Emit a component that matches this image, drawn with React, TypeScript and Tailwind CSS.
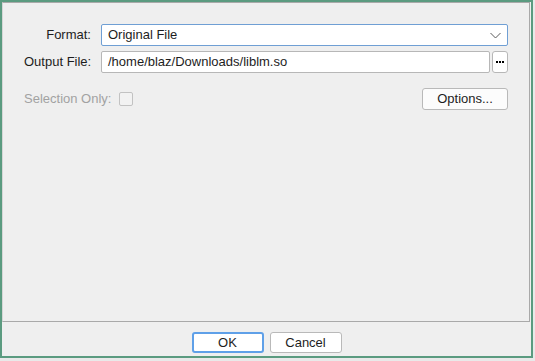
export default function App() {
  return (
    <div className="w-[535px] h-[361px] bg-[#e9e9e9] overflow-hidden font-['Liberation_Sans',Arial,sans-serif] text-[13px] text-[#1d1d1d]">
      <div className="w-[533px] h-[358px] border-2 border-[#5b9b80] bg-[#efefef] flex flex-col">
        {/* Main panel */}
        <div className="h-[320px] mr-[1px] border border-[#a9a9a9] border-l-[#d6d6d6] pt-[21px] pl-[21px] pr-[21px] flex flex-col">
          <div className="flex items-center h-[22px]">
            <span className="w-[68px] shrink-0 whitespace-nowrap text-right pr-[1px]">Format:</span>
            <div className="ml-[9px] flex-1 h-[22px] bg-white border border-[#6f9fd4] rounded-[2px] flex items-center pl-[6px] pr-[6px]">
              <span className="flex-1">Original File</span>
              <svg width="11" height="7" viewBox="0 0 11 7" className="mt-[1px]">
                <path d="M0.5 1 L5.5 6 L10.5 1" fill="none" stroke="#5a5a5a" strokeWidth="1" />
              </svg>
            </div>
          </div>
          <div className="flex items-center h-[22px] mt-[5px]">
            <span className="w-[68px] shrink-0 whitespace-nowrap text-right pr-[1px]">Output File:</span>
            <div className="ml-[9px] flex-1 h-[22px] bg-white border border-[#b7b7b7] rounded-[2px] flex items-center pl-[6px] whitespace-nowrap">
              /home/blaz/Downloads/liblm.so
            </div>
            <button className="ml-[2px] w-[16px] h-[22px] bg-white border border-[#b7b7b7] rounded-[3px] flex items-center justify-center gap-[1px]">
              <span className="w-[2px] h-[2px] bg-black" />
              <span className="w-[2px] h-[2px] bg-black" />
              <span className="w-[2px] h-[2px] bg-black" />
            </button>
          </div>
          <div className="flex items-center h-[22px] mt-[15px]">
            <span className="text-[#a2a2a2] whitespace-nowrap">Selection Only:</span>
            <span className="ml-[8px] w-[14px] h-[14px] border border-[#c2c2c2] rounded-[2px] bg-[#f2f2f2]" />
            <div className="flex-1" />
            <button className="w-[86px] h-[22px] bg-[#fcfcfc] border border-[#b9b9b9] rounded-[3px] flex items-center justify-center">
              Options...
            </button>
          </div>
        </div>
        {/* Button row */}
        <div className="flex justify-center gap-[6px] pt-[10px]">
          <button className="w-[72px] h-[21px] bg-white border-2 border-[#5fa0e8] rounded-[3px] flex items-center justify-center">
            OK
          </button>
          <button className="w-[72px] h-[21px] bg-white border border-[#b9b9b9] rounded-[3px] flex items-center justify-center">
            Cancel
          </button>
        </div>
      </div>
    </div>
  );
}
